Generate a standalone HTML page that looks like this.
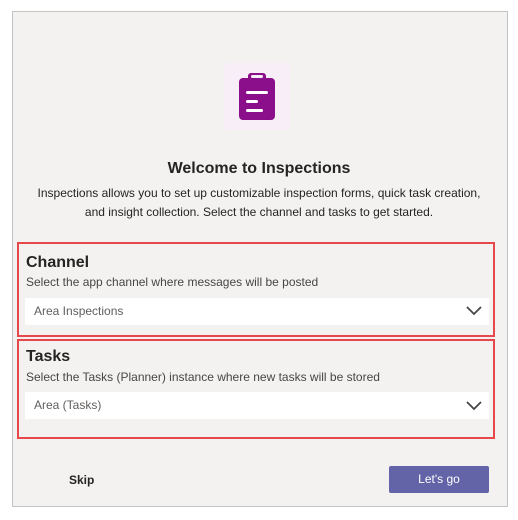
<!DOCTYPE html>
<html><head><style>
body{margin:0;width:518px;height:520px;background:#fff;font-family:"Liberation Sans",sans-serif;position:relative;overflow:hidden;color:#252423}
.panel{position:absolute;left:12px;top:11px;width:494px;height:494px;background:#f3f2f1;border:1px solid #c4c4c4}
.abs{position:absolute}
.box{position:absolute;border:2px solid #e8474b;box-sizing:border-box}
.h{font-size:16px;font-weight:bold;color:#252423}
.s{font-size:12px;color:#484644}
.dd{position:absolute;background:#fff;font-size:12px;color:#605e5c;box-sizing:border-box;padding-left:9px;line-height:27px}
</style></head><body>
<div class="panel"></div>
<div class="abs" style="left:224px;top:63px;width:66px;height:67px;background:#f7eef7;border-radius:3px"></div>
<svg class="abs" style="left:238px;top:72px" width="40" height="50" viewBox="0 0 40 50">
<rect x="1" y="6" width="36" height="42" rx="4" fill="#8b0f8b"/>
<rect x="10" y="1" width="18" height="8" rx="3" fill="#8b0f8b"/>
<rect x="13" y="3" width="12" height="3" rx="1.5" fill="#f7eef7"/>
<rect x="8" y="19" width="22" height="3" rx="1.5" fill="#fff"/>
<rect x="8" y="28" width="12" height="3" rx="1.5" fill="#fff"/>
<rect x="8" y="37" width="17" height="3" rx="1.5" fill="#fff"/>
</svg>
<div class="abs h" style="left:0;width:518px;text-align:center;top:160px;font-size:16px">Welcome to Inspections</div>
<div class="abs s" style="left:0;width:518px;text-align:center;top:184px;line-height:19px;color:#252423">Inspections allows you to set up customizable inspection forms, quick task creation,<br>and insight collection. Select the channel and tasks to get started.</div>
<div class="box" style="left:17px;top:242px;width:478px;height:95px"></div>
<div class="abs h" style="left:26px;top:254px">Channel</div>
<div class="abs s" style="left:26px;top:275px">Select the app channel where messages will be posted</div>
<div class="dd" style="left:25px;top:298px;width:464px;height:27px">Area Inspections</div>
<svg class="abs" style="left:466px;top:306px" width="16" height="10"><path d="M1 1 L8 8 L15 1" stroke="#484644" stroke-width="1.8" fill="none"/></svg>
<div class="box" style="left:17px;top:339px;width:478px;height:100px"></div>
<div class="abs h" style="left:26px;top:348px">Tasks</div>
<div class="abs s" style="left:26px;top:370px">Select the Tasks (Planner) instance where new tasks will be stored</div>
<div class="dd" style="left:25px;top:392px;width:464px;height:27px">Area (Tasks)</div>
<svg class="abs" style="left:466px;top:401px" width="16" height="10"><path d="M1 1 L8 8 L15 1" stroke="#484644" stroke-width="1.8" fill="none"/></svg>
<div class="abs" style="left:69px;top:473px;font-size:12px;font-weight:bold">Skip</div>
<div class="abs" style="left:389px;top:466px;width:100px;height:27px;background:#6264a7;border-radius:2px;color:#fff;font-size:12px;text-align:center;line-height:27px">Let's go</div>
</body></html>
